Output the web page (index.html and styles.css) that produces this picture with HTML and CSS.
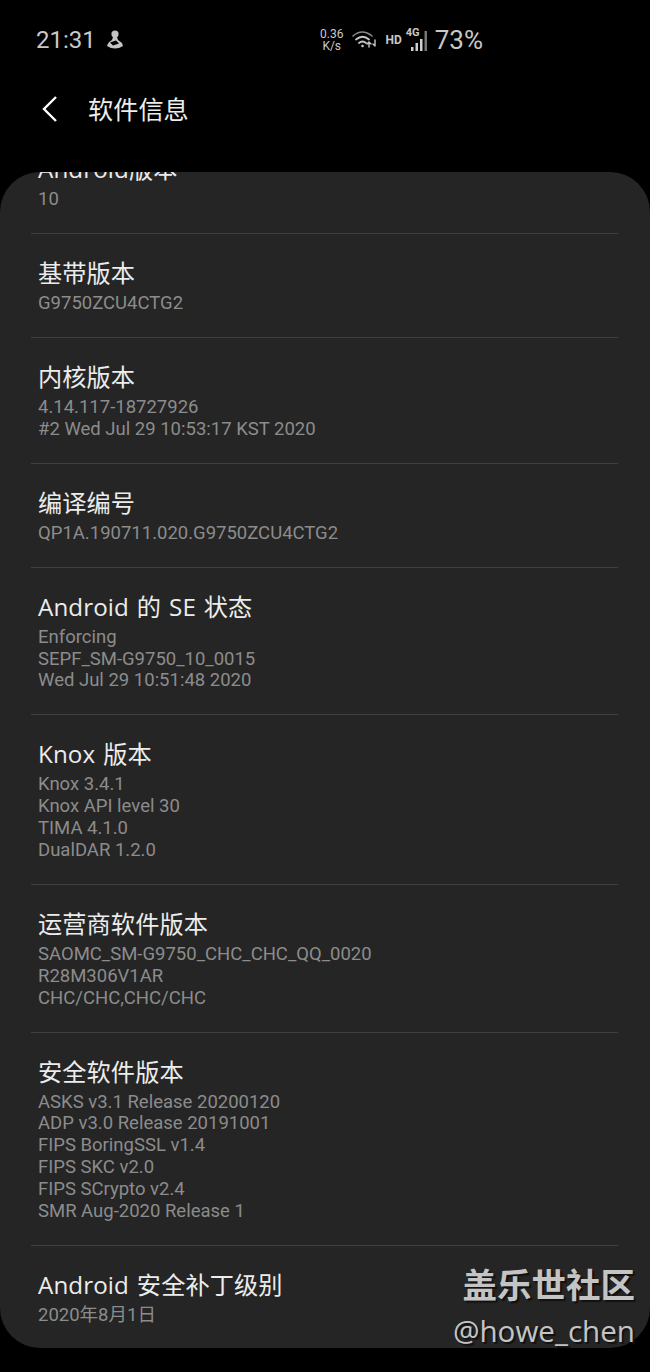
FILE: index.html
```html
<!DOCTYPE html>
<html lang="zh-CN">
<head>
  <meta charset="UTF-8" />
  <meta name="viewport" content="width=device-width, initial-scale=1.0"/>
  <title>软件信息</title>
  <link rel="stylesheet" href="styles.css">
</head>
<body>
  <div class="status-bar">
    <div class="status-left">
      <span class="time">21:31</span>
      <svg class="notify-icon" width="16" height="20" viewBox="0 0 16 20">
        <circle cx="8" cy="4" r="3.6" fill="#c4c4c4"/>
        <path d="M6 7 L10 7 L11 10 L15 13 L16 16 Q8 21 0 16 Q1 12 5 10 Z" fill="#c4c4c4"/>
        <path d="M3 12.5 L9 10.5 L12 13.5 L6 15.5 Z" fill="#000"/>
      </svg>
    </div>
    <div class="status-right">
      <div class="speed"><span>0.36</span><span>K/s</span></div>
      <svg class="wifi-icon" width="26" height="20" viewBox="0 0 26 20" fill="none" stroke="#c8c8c8" stroke-linecap="round">
        <path d="M1 6 Q10 -2 20 6" stroke-width="1.6" stroke="#8a8a8a"/>
        <path d="M4 9.5 Q10.5 4 17 9.5" stroke-width="1.8"/>
        <path d="M7 13 Q10.5 10 14 13" stroke-width="1.8"/>
        <circle cx="10.5" cy="16" r="1.3" fill="#c8c8c8" stroke="none"/>
        <path d="M17 18 V13 M15 15 L17 13 L19 15 M23 11 V17 M21 15 L23 17" stroke-width="1.4" transform="translate(0 -1)"/>
      </svg>
      <span class="hd">HD</span>
      <div class="signal">
        <span class="net">4G</span>
        <svg class="bars" width="22" height="22" viewBox="0 0 22 22" fill="#d0d0d0">
          <rect x="1" y="17" width="2.5" height="4"/>
          <rect x="5.5" y="13" width="2.5" height="8"/>
          <rect x="10" y="9" width="2.5" height="12"/>
          <rect x="14.5" y="1" width="2.5" height="20" fill="#777"/>
        </svg>
      </div>
      <span class="battery">73%</span>
    </div>
  </div>

  <div class="app-bar">
    <svg class="back" width="18" height="28" viewBox="0 0 18 28" fill="none" stroke="#ffffff" stroke-width="2.4">
      <path d="M15 2 L3 14 L15 26"/>
    </svg>
    <span class="page-title">软件信息</span>
  </div>

  <div class="panel">
    <div class="row first-row">
      <div class="row-title">Android版本</div>
      <div class="row-sub">10</div>
    </div>
    <div class="row">
      <div class="row-title">基带版本</div>
      <div class="row-sub">G9750ZCU4CTG2</div>
    </div>
    <div class="row">
      <div class="row-title">内核版本</div>
      <div class="row-sub">4.14.117-18727926</div>
      <div class="row-sub">#2 Wed Jul 29 10:53:17 KST 2020</div>
    </div>
    <div class="row">
      <div class="row-title">编译编号</div>
      <div class="row-sub">QP1A.190711.020.G9750ZCU4CTG2</div>
    </div>
    <div class="row">
      <div class="row-title">Android 的 SE 状态</div>
      <div class="row-sub">Enforcing</div>
      <div class="row-sub">SEPF_SM-G9750_10_0015</div>
      <div class="row-sub">Wed Jul 29 10:51:48 2020</div>
    </div>
    <div class="row">
      <div class="row-title">Knox 版本</div>
      <div class="row-sub">Knox 3.4.1</div>
      <div class="row-sub">Knox API level 30</div>
      <div class="row-sub">TIMA 4.1.0</div>
      <div class="row-sub">DualDAR 1.2.0</div>
    </div>
    <div class="row">
      <div class="row-title">运营商软件版本</div>
      <div class="row-sub">SAOMC_SM-G9750_CHC_CHC_QQ_0020</div>
      <div class="row-sub">R28M306V1AR</div>
      <div class="row-sub">CHC/CHC,CHC/CHC</div>
    </div>
    <div class="row">
      <div class="row-title">安全软件版本</div>
      <div class="row-sub">ASKS v3.1 Release 20200120</div>
      <div class="row-sub">ADP v3.0 Release 20191001</div>
      <div class="row-sub">FIPS BoringSSL v1.4</div>
      <div class="row-sub">FIPS SKC v2.0</div>
      <div class="row-sub">FIPS SCrypto v2.4</div>
      <div class="row-sub">SMR Aug-2020 Release 1</div>
    </div>
    <div class="row last-row">
      <div class="row-title">Android 安全补丁级别</div>
      <div class="row-sub">2020年8月1日</div>
    </div>
  </div>

  <div class="watermark">
    <div class="wm-name">盖乐世社区</div>
    <div class="wm-user">@howe_chen</div>
  </div>
</body>
</html>
```

FILE: styles.css
```css
body {
  font-family: Roboto, "Noto Sans CJK SC", sans-serif;
  background-color: #000;
  margin: 0;
  width: 650px;
  height: 1372px;
  overflow: hidden;
  position: relative;
}

.status-bar {
  height: 78px;
  display: flex;
  justify-content: space-between;
  align-items: center;
  padding: 2px 167px 0 36px;
  box-sizing: border-box;
  color: #c8c8c8;
}

.status-left {
  display: flex;
  align-items: center;
  gap: 11px;
}

.time {
  font-size: 24px;
}

.status-right {
  display: flex;
  align-items: center;
}

.speed {
  display: flex;
  flex-direction: column;
  align-items: center;
  font-size: 12px;
  line-height: 12px;
  margin-right: 9px;
}

.wifi-icon {
  margin-right: 7px;
}

.hd {
  font-size: 12px;
  font-weight: 700;
  margin-right: 5px;
}

.signal {
  position: relative;
  width: 20px;
  height: 24px;
  margin-right: 8px;
}

.net {
  position: absolute;
  top: -2px;
  left: -1px;
  font-size: 11px;
  font-weight: 700;
}

.bars {
  position: absolute;
  top: 2px;
  left: 3px;
}

.battery {
  font-size: 26px;
}

.app-bar {
  height: 62px;
  display: flex;
  align-items: center;
  padding-left: 41px;
  gap: 29px;
}

.page-title {
  font-size: 25.2px;
  line-height: 30px;
  margin-top: 3px;
  color: #ededed;
}

.panel {
  margin-top: 32px;
  height: 1176px;
  background-color: #252525;
  border-radius: 40px;
  overflow: hidden;
}

.row {
  margin: 0 32px 0 31px;
  padding: 18px 7px 22.15px;
  border-bottom: 1px solid #404040;
}

.first-row {
  margin-top: -42px;
}

.last-row {
  border-bottom: none;
}

.row-title {
  font-family: "Open Sans", "Noto Sans CJK SC", sans-serif;
  font-size: 24.2px;
  letter-spacing: 0.1px;
  word-spacing: 1.5px;
  line-height: 41px;
  color: #ececec;
}

.row-sub {
  font-size: 18.5px;
  line-height: 21.85px;
  color: #8c8c8c;
}

.watermark {
  position: absolute;
  right: 15px;
  top: 1263px;
  text-align: right;
  color: #c4c4c4;
  text-shadow: 2px 2px 1px #111;
}

.wm-name {
  font-size: 34.5px;
  font-weight: 700;
  line-height: 46px;
}

.wm-user {
  font-family: "Open Sans", sans-serif;
  font-size: 29.6px;
  line-height: 44px;
}
```
